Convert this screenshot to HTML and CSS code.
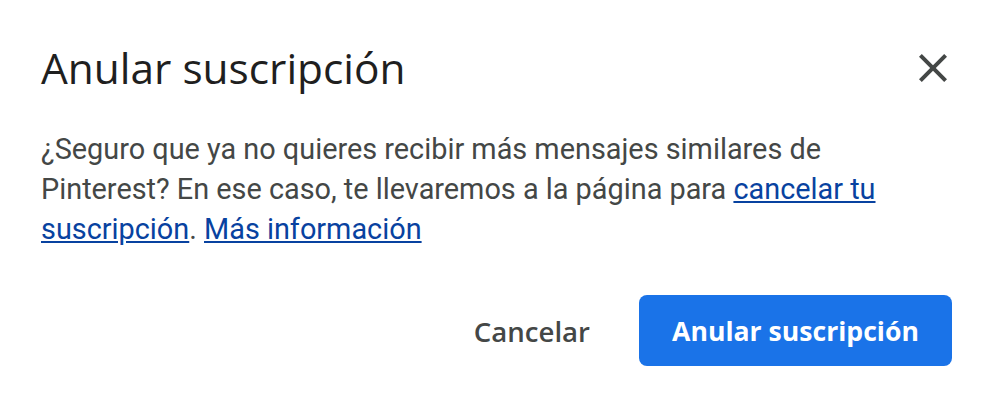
FILE: index.html
```html
<!DOCTYPE html>
<html lang="es">
<head>
<meta charset="utf-8">
<title>Anular suscripción</title>
<link rel="stylesheet" href="styles.css">
</head>
<body>
<div class="dialog">
  <div class="header">
    <h1 class="title">Anular suscripción</h1>
    <button class="close" aria-label="Cerrar">
      <svg viewBox="0 0 24 24" width="48" height="48"><path d="M19 6.41L17.59 5 12 10.59 6.41 5 5 6.41 10.59 12 5 17.59 6.41 19 12 13.41 17.59 19 19 17.59 13.41 12z"/></svg>
    </button>
  </div>
  <p class="body">¿Seguro que ya no quieres recibir más mensajes similares de Pinterest? En ese caso, te llevaremos a la página para <a href="#">cancelar tu suscripción</a>. <a href="#">Más información</a></p>
  <div class="actions">
    <button class="btn-text">Cancelar</button>
    <button class="btn-primary">Anular suscripción</button>
  </div>
</div>
</body>
</html>
```
FILE: styles.css
```css
html, body {
  margin: 0;
  padding: 0;
  background: #ffffff;
}

.dialog {
  display: flex;
  flex-direction: column;
  padding: 40px 44px 0 41px;
}

.header {
  display: flex;
  justify-content: space-between;
  align-items: flex-start;
}

.title {
  margin: 0;
  font-family: "Open Sans", sans-serif;
  font-weight: 400;
  font-size: 42.4px;
  line-height: 56px;
  color: #1f1f1f;
}

.close {
  width: 48px;
  height: 48px;
  margin-top: 4px;
  margin-right: -5px;
  padding: 0;
  border: 0;
  background: none;
  display: flex;
  align-items: center;
  justify-content: center;
}

.close svg {
  fill: #444746;
  display: block;
}

.body {
  margin: 33px 0 0 0;
  max-width: 850px;
  font-family: Roboto, sans-serif;
  font-size: 28.85px;
  line-height: 40px;
  color: #444746;
}

.body a {
  color: #0842a0;
  text-decoration: underline;
}

.actions {
  display: flex;
  justify-content: flex-end;
  align-items: center;
  margin-top: 46px;
}

.btn-text {
  height: 71px;
  padding: 0 24px;
  margin-right: 25px;
  border: 0;
  background: none;
  font-family: "Open Sans", sans-serif;
  font-weight: 600;
  font-size: 27.6px;
  color: #444746;
}

.btn-primary {
  height: 71px;
  width: 313px;
  padding: 0;
  border: 0;
  border-radius: 8px;
  background: #1a73e8;
  color: #ffffff;
  font-family: "Open Sans", sans-serif;
  font-weight: 700;
  font-size: 26.6px;
}
```
